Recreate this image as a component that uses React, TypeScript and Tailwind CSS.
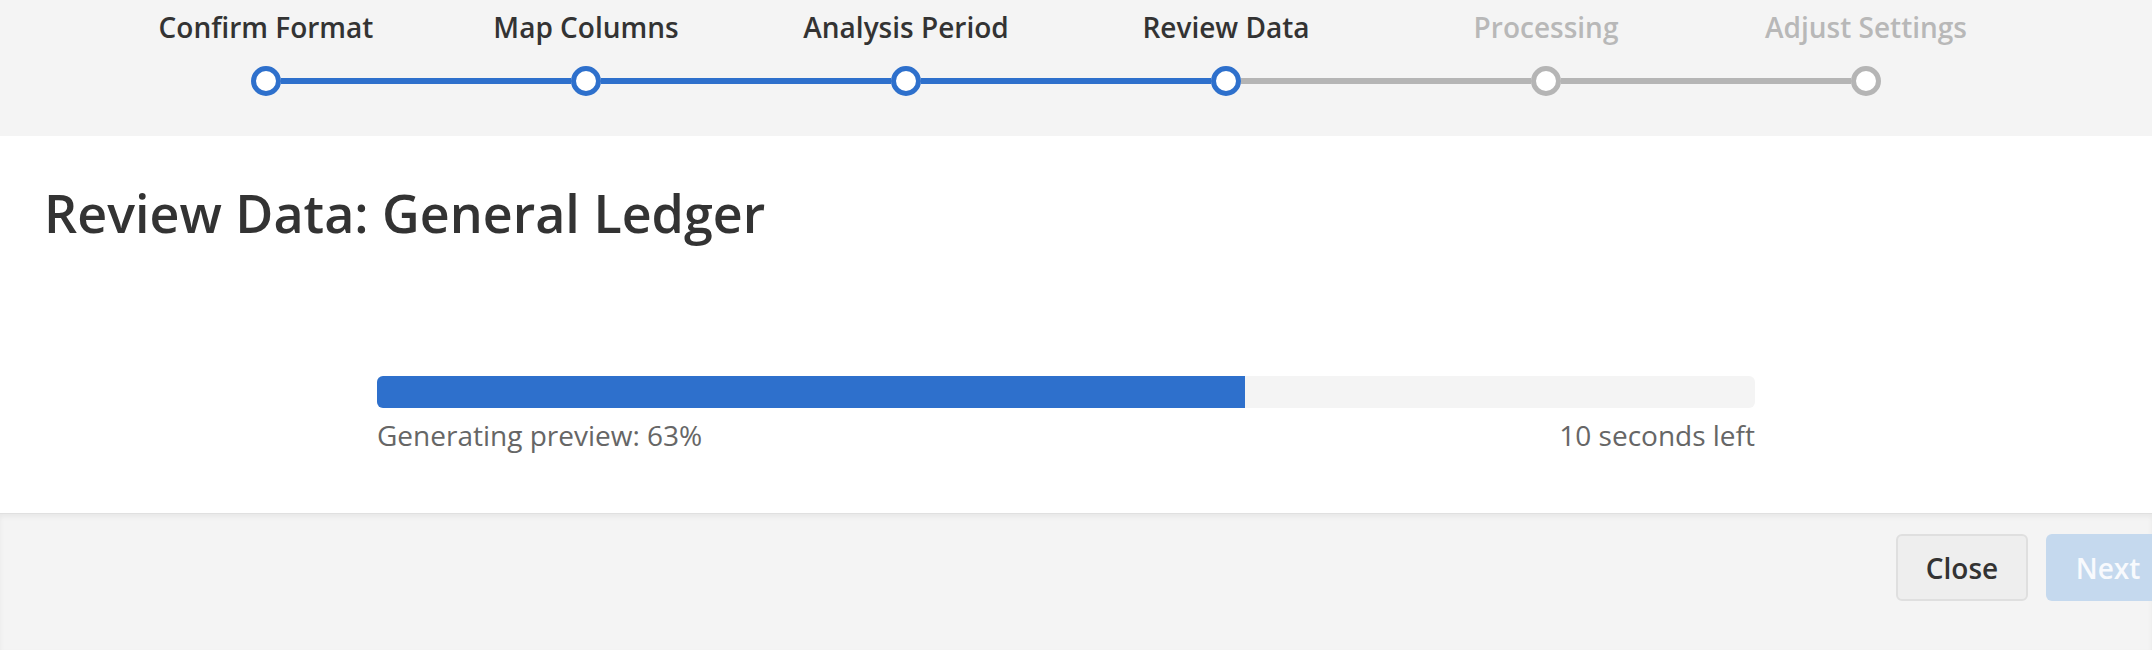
import React from "react";

const steps = [
  "Confirm Format",
  "Map Columns",
  "Analysis Period",
  "Review Data",
  "Processing",
  "Adjust Settings",
];
const current = 3;

function Step({ label, index }: { label: string; index: number }) {
  const done = index <= current;
  const leftBlue = index <= current;
  const rightBlue = index < current;
  const first = index === 0;
  const last = index === steps.length - 1;
  return (
    <div className="flex flex-col items-center">
      <div
        className={
          "text-[28px] leading-[38px] font-semibold whitespace-nowrap " +
          (done ? "text-[#333333]" : "text-[#b8b8b8]")
        }
      >
        {label}
      </div>
      <div className="mt-[20px] flex w-full items-center">
        <div
          className={
            "h-[6px] flex-1 " +
            (first ? "bg-transparent" : leftBlue ? "bg-[#2e70cc]" : "bg-[#b5b5b5]")
          }
        />
        <div
          className={
            "h-[30px] w-[30px] shrink-0 rounded-full border-[5px] bg-white " +
            (done ? "border-[#2e70cc]" : "border-[#b5b5b5]")
          }
        />
        <div
          className={
            "h-[6px] flex-1 " +
            (last ? "bg-transparent" : rightBlue ? "bg-[#2e70cc]" : "bg-[#b5b5b5]")
          }
        />
      </div>
    </div>
  );
}

export default function App() {
  return (
    <div
      className="h-[650px] w-[2152px] overflow-hidden bg-[#f4f4f4] flex flex-col"
      style={{ fontFamily: '"Open Sans", "Noto Sans", sans-serif' }}
    >
      {/* Stepper header */}
      <div className="h-[136px] shrink-0 bg-[#f4f4f4]">
        <div className="w-[2132px] flex justify-center pt-[8px]">
          <div className="grid w-[1920px] grid-cols-6">
            {steps.map((s, i) => (
              <Step key={s} label={s} index={i} />
            ))}
          </div>
        </div>
      </div>

      {/* Content */}
      <div className="h-[377px] shrink-0 bg-white">
        <div className="pl-[44px] pr-[42px] pt-[41px]">
          <h1 className="text-[52px] leading-[71px] font-semibold text-[#333333]">
            Review Data: General Ledger
          </h1>
        </div>
        <div className="w-[2132px] flex justify-center mt-[128px]">
          <div className="w-[1378px]">
            <div className="h-[32px] w-full rounded-[6px] bg-[#f4f4f4] overflow-hidden">
              <div className="h-full w-[63%] bg-[#2e70cc]" />
            </div>
            <div className="mt-[8px] flex justify-between text-[28px] leading-[38px] text-[#666666]">
              <span>Generating preview: 63%</span>
              <span>10 seconds left</span>
            </div>
          </div>
        </div>
      </div>

      {/* Footer */}
      <div className="flex-1 border-t border-[#e0e0e0] bg-[#f4f4f4] shadow-[inset_0_3px_5px_rgba(0,0,0,0.05)]">
        <div className="flex justify-end gap-[18px] pt-[20px] -mr-[18px]">
          <button className="h-[67px] w-[132px] rounded-[6px] border-2 border-[#dfdfdf] bg-[#eeeeee] text-[28px] font-semibold text-[#333333]">
            Close
          </button>
          <button className="h-[67px] w-[124px] rounded-[6px] bg-[#c5d9ee] text-[28px] font-semibold text-[#f8fafd]">
            Next
          </button>
        </div>
      </div>
    </div>
  );
}
